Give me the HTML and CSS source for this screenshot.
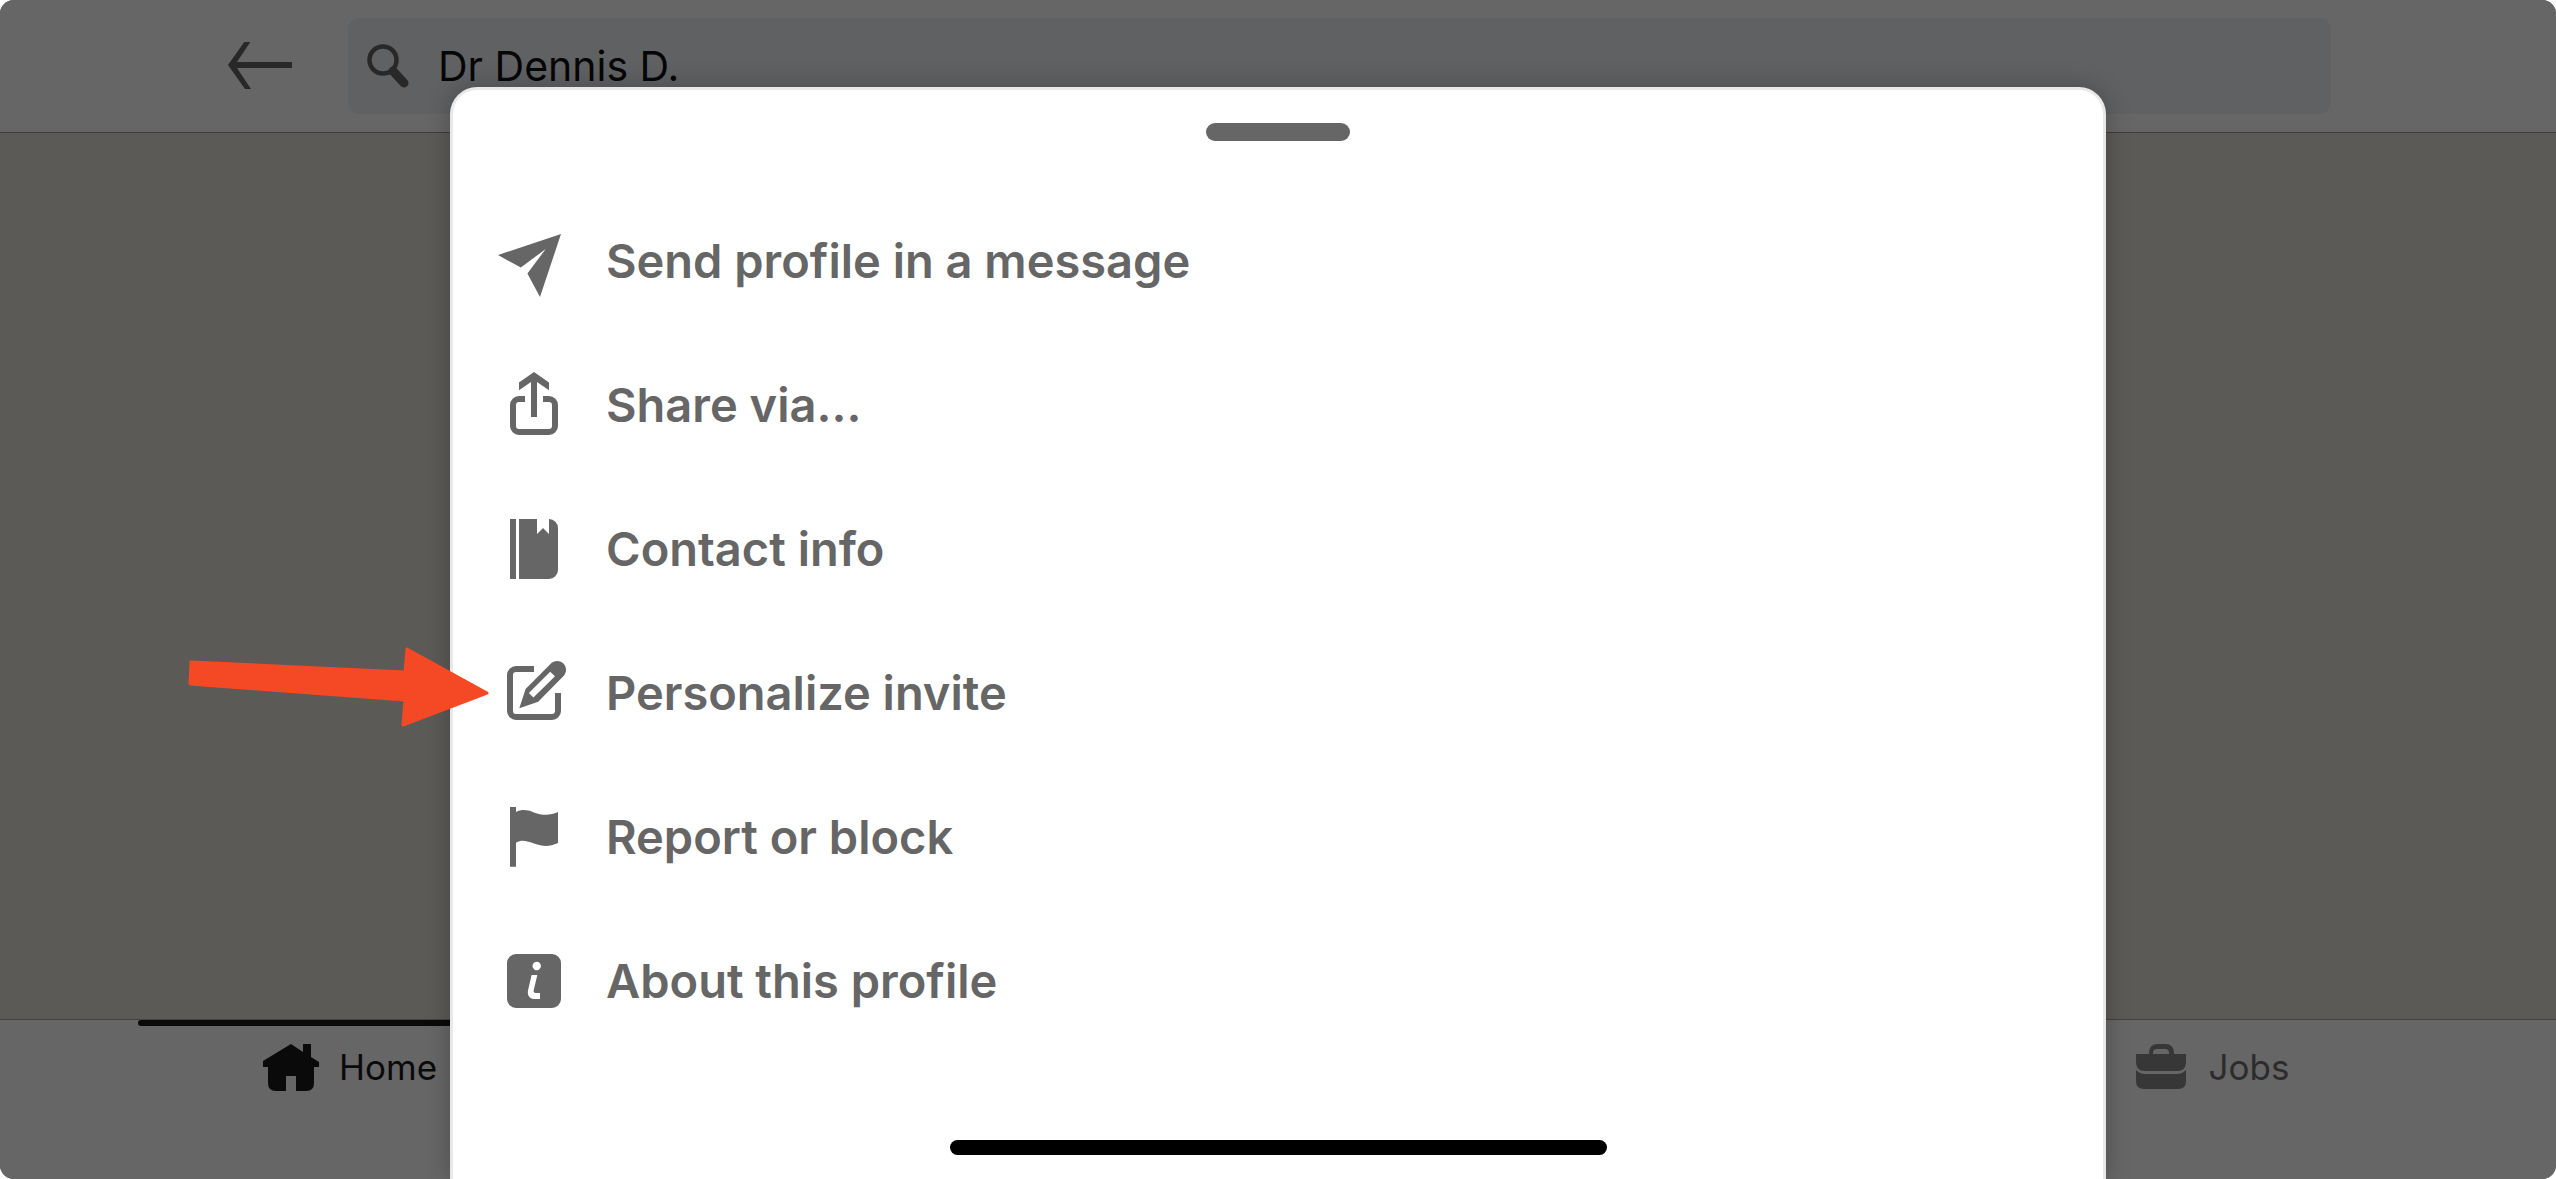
FILE: index.html
```html
<!DOCTYPE html>
<html lang="en">
<head>
<meta charset="utf-8">
<meta name="viewport" content="width=device-width, initial-scale=1">
<title>Profile actions</title>
<link rel="stylesheet" href="styles.css">
</head>
<body>
<div class="app">
  <header class="topbar">
    <button class="back" type="button" aria-label="Back">
      <svg viewBox="0 1 64 48" width="64" height="48"><path d="M17 0h6L9 21h55v6H9l14 21h-6L0 24z"/></svg>
    </button>
    <label class="search">
      <svg class="search-icon" viewBox="0 0 44 44" width="44" height="44"><circle cx="17" cy="16" r="13.5" fill="none" stroke="currentColor" stroke-width="4.5"/><path d="M27 27l11 12" fill="none" stroke="currentColor" stroke-width="9" stroke-linecap="round"/></svg>
      <input class="search-input" type="text" aria-label="Search" value="Dr Dennis D.">
    </label>
  </header>
  <main class="content"></main>
  <nav class="tabs">
    <a class="tab tab-active" href="#home">
      <svg viewBox="0 0 56 48" width="56" height="48"><path d="M28 0l12 8V0h8v13l8 5v5h-5v16q0 8-8 8H33V32H23v15H13q-8 0-8-8V23H0v-6z"/></svg>
      <span>Home</span>
    </a>
    <a class="tab tab-jobs" href="#jobs">
      <svg viewBox="-3 0 56 48" width="56" height="48"><path fill-rule="evenodd" d="M13 10V9q0-9 9-9h7q9 0 9 9v1h12v8q0 9-9 9H9q-9 0-9-9v-8zM17 10h16V9q0-4-4-4h-8q-4 0-4 4z"/><path d="M0 26q4 4 9 4h32q5 0 9-4v11q0 8-8 8H8q-8 0-8-8z"/></svg>
      <span>Jobs</span>
    </a>
  </nav>
</div>

<div class="overlay">
  <section class="sheet" role="dialog" aria-label="Profile actions">
    <div class="grabber"></div>
    <div class="menu">
      <button class="item" type="button">
        <svg class="icon" viewBox="0 0 24 24"><path d="M21 3L0 10l7.600 4.200L15.900 8 9.800 16.200 14 24z"/></svg>
        <span>Send profile in a message</span>
      </button>
      <button class="item" type="button">
        <svg class="icon" viewBox="0 0 24 24"><path d="M12 1l5 3.500v2.600l-4-2.800V16h-2V4.300L7 7.100V4.500zM9 9v2H7a1 1 0 0 0-1 1v7a1 1 0 0 0 1 1h10a1 1 0 0 0 1-1v-7a1 1 0 0 0-1-1h-2V9h2a3 3 0 0 1 3 3v7a3 3 0 0 1-3 3H7a3 3 0 0 1-3-3v-7a3 3 0 0 1 3-3z"/></svg>
        <span>Share via...</span>
      </button>
      <button class="item" type="button">
        <svg class="icon" viewBox="0 0 24 24"><path d="M4 2h2v20H4zM7 2h6v5l2-2 2 2V2a3 3 0 0 1 3 3v14a3 3 0 0 1-3 3H7z"/></svg>
        <span>Contact info</span>
      </button>
      <button class="item" type="button">
        <svg class="icon" viewBox="0 0 24 24"><path d="M19 12h2v6a3 3 0 0 1-3 3H6a3 3 0 0 1-3-3V6a3 3 0 0 1 3-3h6v2H6a1 1 0 0 0-1 1v12a1 1 0 0 0 1 1h12a1 1 0 0 0 1-1z"/><path fill-rule="evenodd" d="M9.200 10.700L17.900 1.900a3 3 0 0 1 4.200 4.200L13.400 14.900 7.100 17.100zM17.400 4.900L10.300 12l1.500 1.500L19 6.400z"/></svg>
        <span>Personalize invite</span>
      </button>
      <button class="item" type="button">
        <svg class="icon" viewBox="0 0 24 24"><path d="M4 2h2v1.700C8 2.700 9.500 2.900 12 3.800s5 1.300 8-.1V14c-3 1.400-5 1.200-8 .2s-4-1.300-6-.3v8H4z"/></svg>
        <span>Report or block</span>
      </button>
      <button class="item" type="button">
        <svg class="icon" viewBox="0 0 24 24"><path fill-rule="evenodd" d="M6 3h12a3 3 0 0 1 3 3v12a3 3 0 0 1-3 3H6a3 3 0 0 1-3-3V6a3 3 0 0 1 3-3zM12.900 5.600a1.400 1.400 0 1 0 .01 0zM11.200 10L10 15.200c-.3 1.800.7 2.800 2.500 2.800H14v-2h-1.400c-.6 0-.8-.3-.7-.9L13.100 10z"/></svg>
        <span>About this profile</span>
      </button>
    </div>
    <div class="home-indicator"></div>
  </section>
</div>

<svg class="pointer" viewBox="0 0 304 82" width="304" height="82" aria-hidden="true"><path d="M4 16L218 26 220 3 300 47 216 79 218 54 3 38z"/></svg>
</body>
</html>
```
FILE: styles.css
```css
* {
  box-sizing: border-box;
}

body {
  margin: 0;
  background: #fff;
  font-family: Inter, "Liberation Sans", sans-serif;
}

button,
input {
  margin: 0;
  padding: 0;
  border: 0;
  background: none;
  font: inherit;
  color: inherit;
}

svg {
  flex: none;
  fill: currentColor;
}

.app {
  display: flex;
  flex-direction: column;
  min-height: 100vh;
  overflow: hidden;
  border-radius: 14px;
  background: #5c5a57;
}

.topbar {
  display: flex;
  align-items: center;
  gap: 56px;
  padding: 18px 225px 18px 228px;
  border-bottom: 1px solid #413c3c;
  background: #666;
  color: #282828;
}

.back {
  display: flex;
}

.search {
  display: flex;
  flex: 1;
  align-items: center;
  gap: 28px;
  height: 96px;
  padding: 0 18px;
  border-radius: 12px;
  background: #606163;
}

.search-input {
  flex: 1;
  min-width: 0;
  color: #060606;
  font-size: 41px;
}

.content {
  flex: 1;
}

.tabs {
  display: flex;
  justify-content: space-between;
  height: 160px;
  padding: 0 138px;
  border-top: 1px solid #483f3f;
  background: #666;
}

.tab {
  position: relative;
  display: flex;
  flex: 0 1 424px;
  align-items: center;
  align-self: flex-start;
  justify-content: center;
  gap: 20px;
  height: 96px;
  color: #2c2c2c;
  font-size: 35px;
  text-decoration: none;
}

.tab span,
.item span {
  padding-bottom: 2px;
}

.tab-jobs {
  flex-basis: 414px;
}

.tab-jobs svg {
  color: #373737;
}

.tab-active {
  color: #0a0a0a;
}

.tab-active::before {
  content: "";
  position: absolute;
  top: 0;
  right: 0;
  left: 0;
  height: 6px;
  border-radius: 3px;
  background: #0a0a0a;
}

.overlay {
  position: absolute;
  inset: 0;
  display: flex;
  justify-content: center;
  overflow: hidden;
  padding-top: 87px;
}

.sheet {
  display: flex;
  flex-direction: column;
  align-items: center;
  width: 100%;
  max-width: 1656px;
  padding: 33px 45px 24px;
  border: 3px solid #e8e8e8;
  border-bottom: 0;
  border-radius: 27px 27px 0 0;
  background: #fff;
  box-shadow: 0 0 24px rgba(0, 0, 0, 0.25);
  color: #666;
}

.grabber {
  width: 144px;
  height: 18px;
  border-radius: 9px;
  background: #666;
}

.menu {
  display: flex;
  flex-direction: column;
  align-self: stretch;
  margin-top: 48px;
}

.item {
  display: flex;
  align-items: center;
  gap: 36px;
  height: 144px;
  font-size: 47px;
  font-weight: 600;
  text-align: left;
}

.icon {
  width: 72px;
  height: 72px;
}

.home-indicator {
  width: 657px;
  height: 15px;
  margin-top: auto;
  border-radius: 8px;
  background: #000;
}

.pointer {
  position: absolute;
  top: 646px;
  left: 187px;
  fill: #f54925;
  stroke: #f54925;
  stroke-width: 3px;
  stroke-linejoin: round;
}
```
